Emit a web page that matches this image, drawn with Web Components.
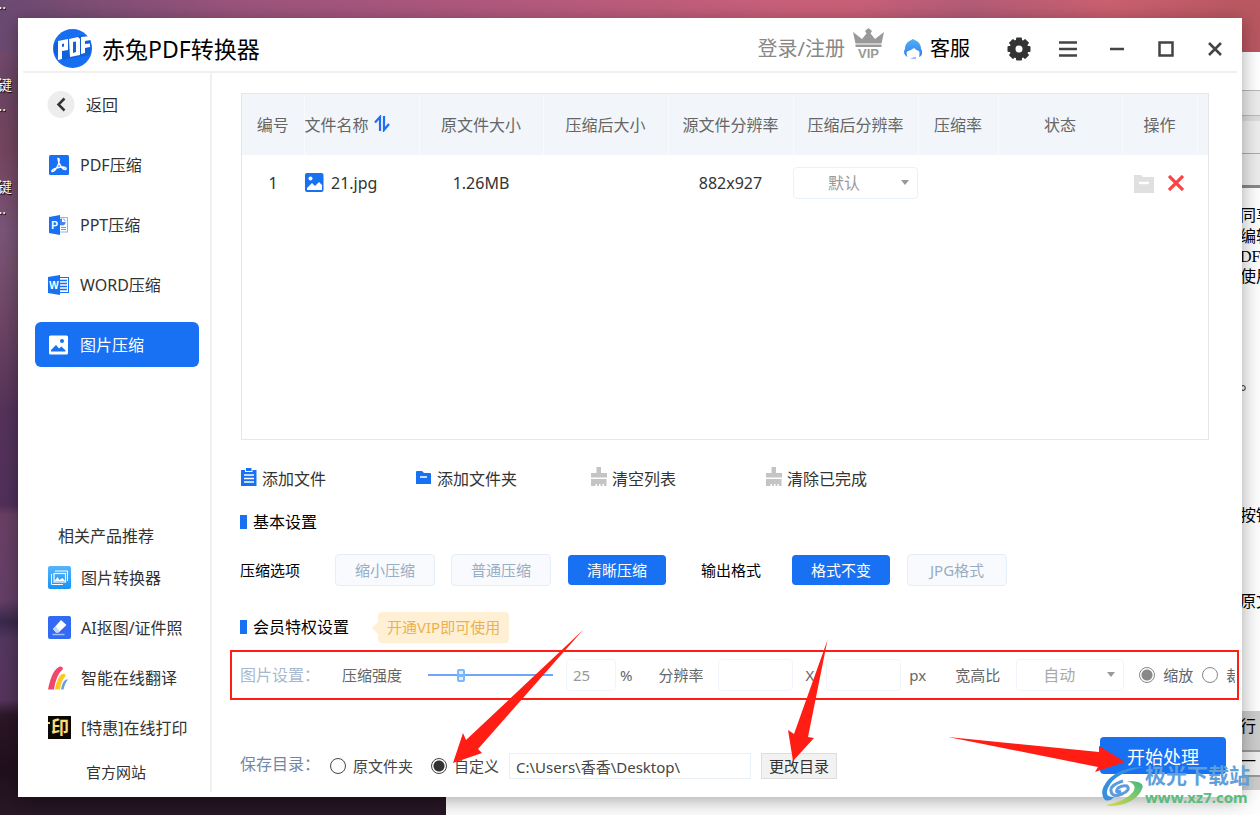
<!DOCTYPE html>
<html lang="zh-CN">
<head>
<meta charset="utf-8">
<title>赤兔PDF转换器</title>
<style>
  html, body { margin: 0; height: 100%; }
  body { font-family: "Noto Sans", "Noto Sans CJK SC", sans-serif; font-size: 16px; line-height: 24px; color: #333; }
</style>
</head>
<body>
<desk-scene>
  <app-window>
    <title-bar slot="title"></title-bar>
    <side-nav slot="nav"></side-nav>
    <file-table></file-table>
    <tool-row></tool-row>
    <section-heading>基本设置</section-heading>
    <option-row></option-row>
    <section-heading class="vip">会员特权设置<vip-badge slot="extra">开通VIP即可使用</vip-badge></section-heading>
    <image-settings></image-settings>
    <save-row></save-row>
  </app-window>
</desk-scene>

<script>
function define(name, html) {
  const tpl = document.createElement('template');
  tpl.innerHTML = html;
  customElements.define(name, class extends HTMLElement {
    constructor() {
      super();
      this.attachShadow({ mode: 'open' }).append(tpl.content.cloneNode(true));
    }
  });
}

/* Desktop with the document window behind the application */
define('back-window', `
<style>
  :host { display: block; position: absolute; left: 446px; right: 0; top: 52px; bottom: 0; background: #fdfdfd; overflow: hidden; color: #000; font-family: "Liberation Serif", "Noto Sans CJK SC", serif; }
  .bars { height: 136px; background: linear-gradient(#fff 0 38px, #b8b8b8 38px 39px, #ececec 39px 63px, #bbb 63px 64px, #dcdcdc 64px 69px, #ededed 69px 101px, #aaa 101px 102px, #ececec 102px 133px, #888 133px 136px); }
  .foot { position: absolute; left: 0; right: 0; bottom: 25px; height: 79px; background: linear-gradient(#ccc 0 39px, #999 39px 41px, #eee 41px 64px, #999 64px 66px, #ccc 66px); }
  span { position: absolute; right: 0; width: 20px; height: 20px; line-height: 20px; white-space: nowrap; overflow: hidden; }
</style>
<div class="bars"></div><div class="foot"></div>
<span style="top:154px">同享</span><span style="top:175px">编辑</span><span style="top:195px">DF转</span><span style="top:215px">使用</span>
<span style="top:322px">。</span><span style="top:454px">按钮</span><span style="top:540px">原文</span><span style="top:665px">行</span><span style="top:700px">一</span>`);

define('desk-scene', `
<style>
  :host { display: flex; position: relative; box-sizing: border-box; min-height: 100vh; padding: 18px; overflow: hidden;
    background: linear-gradient(90deg, #6b4a72, #9a547c 230px, #ab577e 420px, #c9607a 62%, #c96078 68%, #b45c78 77%, #cb6070 88%, #b8575f) 0 0 / 100% 52px no-repeat,
      linear-gradient(#80527b, #6c4565 80px, #74455f 150px, #7a5578 230px, #76506f 270px, #6c4464 330px, #55335a 410px, #51305a 505px, #6a4065 515px, #643f67 600px, #39294b 622px, #55375f 640px, #56345c 700px, #2c1628 715px, #21101c 770px, #281726); }
  slot { display: contents; }
  .cap { position: absolute; left: 0; width: 12px; height: 20px; overflow: hidden; direction: rtl; color: #fff; font-size: 14px; line-height: 20px; text-shadow: 1px 1px 1px #000; }
  .dots { width: 6px; }
</style>
<span class="cap dots" style="top:-6px">..</span><span class="cap" style="top:75px">键</span><span class="cap dots" style="top:96px">..</span>
<span class="cap" style="top:177px">键</span><span class="cap dots" style="top:199px">..</span>
<back-window></back-window><slot></slot>`);

define('app-window', `
<style>
  :host { position: relative; display: flex; flex-direction: column; flex: 1; min-width: 0; background: #fff; box-shadow: 0 3px 18px rgba(0,0,0,.35); }
  .body { flex: 1; display: flex; min-height: 0; }
  main { flex: 1; min-width: 0; display: flex; flex-direction: column; padding: 20px 16px 2px 28px; }
</style>
<slot name="title"></slot>
<div class="body"><slot name="nav"></slot><main><slot></slot></main></div>
<callout-marks></callout-marks>`);

define('title-bar', `
<style>
  :host { display: flex; align-items: center; height: 53px; margin: 0 5px; padding: 0 0 0 30px; border-bottom: 2px solid #efefef; }
  h1 { flex: 1; margin: 0 0 0 10px; padding-top: 8px; font-size: 23px; font-weight: 400; line-height: 30px; color: #000; white-space: nowrap; }
  .logo { margin-top: 7px; }
  a { display: flex; align-items: center; gap: 8px; margin-top: 9px; font-size: 20px; line-height: 28px; text-decoration: none; color: #888; white-space: nowrap; }
  a.help { color: #000; margin: 9px 24px 0 20px; }
  .login svg { margin-top: -8px; }
  .tools { display: flex; margin: 8px -2px 0 0; }
  button { width: 49px; height: 32px; padding: 0; border: 0; background: none; display: grid; place-items: center; }
  svg { display: block; }
</style>
<svg class="logo" width="39" height="39" viewBox="0 0 39 39"><circle cx="19.500" cy="19.500" r="19.500" fill="#176ef2"/><path d="M1 14 30 6 38 11 37 26 8 31 1 24Z" fill="#0c51bd" opacity=".45"/><path d="M5 12 15 10V21L9 22V30L5 31Z M9 15V18L11 17.600V14.600Z M16 10 25 8 27 10V26L17 28Z M20 13V24L23 23V12.500Z M28 8 38 7V11L32 12V15L37 14.500V18L32 19V24L28 25Z" fill="#fff" fill-rule="evenodd"/></svg>
<h1>赤兔PDF转换器</h1>
<a class="login" href="#login">登录/注册
<svg width="31" height="34" viewBox="0 0 31 34"><path d="M0 4 9 11 13.500 5.500 12 3 15.500 0 19 3 17.500 5.500 22 11 31 4 28.500 15.500H2.500Z M2.500 16.500H28.500V19H2.500Z" fill="#999"/><text x="15.500" y="30" text-anchor="middle" font-family="Liberation Sans" font-weight="700" font-size="13" fill="#999">VIP</text></svg></a>
<a class="help" href="#help"><svg width="18" height="20" viewBox="0 0 18 20"><defs><linearGradient id="h" x2="0" y2="1"><stop stop-color="#4eb2f2"/><stop offset="1" stop-color="#3577f5"/></linearGradient></defs><path d="M9 0 13.500 2.500Q17 5 17 10Q19 12 18 15Q17 18 15 18Q16 14 15 12L12.500 11 10 9Q6 12 3 12.500Q2 15 3.500 18Q0 16 0 13Q0 11 1 10Q1 5 4.500 2.500Z M6 18.500H8M10 18.500H12V19.500H6Z" fill="url(#h)"/></svg>客服</a>
<div class="tools">
<button aria-label="设置"><svg width="24" height="24" viewBox="-12 -12 24 24"><g fill="#333"><circle r="9.500"/><rect x="-3" y="-11.500" width="6" height="23" rx="1"/><rect x="-11.500" y="-3" width="23" height="6" rx="1"/><g transform="rotate(45)"><rect x="-3" y="-11.500" width="6" height="23" rx="1"/><rect x="-11.500" y="-3" width="23" height="6" rx="1"/></g></g><circle r="3.500" fill="#fff"/></svg></button>
<button aria-label="菜单"><svg width="18" height="16" viewBox="0 0 18 16"><path d="M0 1.500H18M0 8H18M0 14.500H18" stroke="#444" stroke-width="2.500"/></svg></button>
<button aria-label="最小化"><svg width="14" height="4" viewBox="0 0 14 4"><path d="M0 2H14" stroke="#444" stroke-width="2.500"/></svg></button>
<button aria-label="最大化"><svg width="16" height="16" viewBox="0 0 16 16"><rect x="1.500" y="1.500" width="13" height="13" fill="none" stroke="#444" stroke-width="2.500"/></svg></button>
<button aria-label="关闭"><svg width="14" height="14" viewBox="0 0 14 14"><path d="M1 1 13 13M13 1 1 13" stroke="#444" stroke-width="2.600"/></svg></button>
</div>`);

define('nav-item', `
<style>
  :host { display: block; }
  a { display: flex; align-items: center; box-sizing: border-box; height: 45px; padding: 0 0 0 12px; border-radius: 6px; color: #333; text-decoration: none; white-space: nowrap; }
  ::slotted(svg) { width: 24px; height: 24px; margin-right: 9px; flex: none; }
  :host([active]) a { background: #1870f3; color: #fff; }
  :host([small]) a { height: 30px; }
  :host([small]) ::slotted(svg) { margin-right: 9px; margin-left: 1px; }
  :host([back]) ::slotted(svg) { width: 28px; height: 28px; margin-right: 11px; }
</style><a href="#"><slot name="icon"></slot><slot></slot></a>`);

define('side-nav', `
<style>
  :host { display: flex; flex-direction: column; justify-content: space-between; box-sizing: border-box; width: 194px; flex: none; margin-bottom: 5px; padding: 9px 11px 10px 17px; border-right: 2px solid #f0f0f0; }
  nav { display: grid; gap: 15px; }
  .rel { gap: 20px; }
  h2 { margin: 0 0 -5px 23px; font-size: 16px; line-height: 24px; font-weight: 400; color: #333; }
  .site { margin: -1px 0 0 51px; font-size: 15px; line-height: 20px; color: #333; text-decoration: none; }
</style>
<nav>
<nav-item back><svg slot="icon" viewBox="0 0 28 28"><circle cx="14" cy="13.500" r="13.500" fill="#ededed"/><path d="M17.500 7.500 11.500 13.500 17.500 19.500" fill="none" stroke="#333" stroke-width="2.500"/></svg>返回</nav-item>
<nav-item><svg slot="icon" viewBox="0 0 24 24"><rect x="2" y="2" width="20" height="20" rx="1.500" fill="#1870f3"/><path d="M11 5.500C13 5 12 9 11.500 11C10 15 7 19 5 18.500C4 17 9 14.500 14 14C19 13.500 20 16 18.500 16.500C16 17 11 11 11 5.500Z" fill="none" stroke="#fff" stroke-width="1.400"/></svg>PDF压缩</nav-item>
<nav-item><svg slot="icon" viewBox="0 0 24 24"><rect x="12" y="4.500" width="8.500" height="14.500" fill="#fff" stroke="#8ab6f8"/><circle cx="15" cy="9" r="3.500" fill="#3f86f4"/><path d="M15 9V5L19 9Z" fill="#fff"/><path d="M14 14.500H19M14 16.500H19" stroke="#5f9bf6"/><path d="M2 4 13 2V22L2 20Z" fill="#1870f3"/><text x="7.500" y="15.500" text-anchor="middle" font-family="Liberation Sans" font-weight="700" font-size="10" fill="#fff">P</text></svg>PPT压缩</nav-item>
<nav-item><svg slot="icon" viewBox="0 0 24 24"><rect x="12" y="4.500" width="9.500" height="15" fill="#fff" stroke="#1870f3"/><path d="M13 7.500H20M13 10.500H20M13 13.500H20M13 16.500H20" stroke="#1870f3" stroke-width="1.500"/><path d="M1 4 13 2V22L1 20Z" fill="#1870f3"/><text x="7" y="15.500" text-anchor="middle" font-family="Liberation Sans" font-weight="700" font-size="10" fill="#fff">W</text></svg>WORD压缩</nav-item>
<nav-item active><svg slot="icon" viewBox="0 0 24 24"><rect x="2" y="2.500" width="19" height="19" rx="1.500" fill="#fff"/><circle cx="15" cy="8" r="2" fill="#1870f3"/><path d="M4 18.500V17L9 12 12 15.500 14.500 13.500 18.500 17.500V18.500Z" fill="#1870f3"/></svg>图片压缩</nav-item>
</nav>
<nav class="rel">
<h2>相关产品推荐</h2>
<nav-item small><svg slot="icon" viewBox="0 0 24 24"><defs><linearGradient id="b" x2="0" y2="1"><stop stop-color="#56b5fb"/><stop offset="1" stop-color="#1794f5"/></linearGradient></defs><rect x="0" y="0" width="23" height="23" rx="2" fill="url(#b)"/><path d="M7 5H19.500V15M3.500 8V18.500H15" fill="none" stroke="#fff"/><rect x="6" y="7.500" width="11.500" height="8.500" fill="none" stroke="#fff" stroke-width="1.200"/><path d="M6.500 15 9.500 11 11.500 14 14.500 12 17 15Z" fill="#fff"/></svg>图片转换器</nav-item>
<nav-item small><svg slot="icon" viewBox="0 0 24 24"><rect width="23" height="23" rx="2" fill="#336af3"/><path d="M13 4 18.500 9 10.500 16.500H8L5 13Z" fill="#fff"/><path d="M7.500 10.500 12 15 10.500 16.500H8L5 13Z" fill="#c5d7ff"/><path d="M4.500 18.500H16.500" stroke="#9fbdfc" stroke-width="1.500"/></svg>AI抠图/证件照</nav-item>
<nav-item small><svg slot="icon" viewBox="0 0 24 24"><path d="M0 23.500Q4 3 12 .500Q15 0 15 3Q8 9 6 23.500Z" fill="#f2476c"/><path d="M7 23.500Q9 11 14 8Q18 7 17.500 10Q13 15 12 23.500Z" fill="#fec824"/><path d="M13 23.500Q14.500 15 18 13.500L20 13.500Q17 17 15.500 23.500Z" fill="#679fe0"/></svg>智能在线翻译</nav-item>
<nav-item small><svg slot="icon" viewBox="0 0 24 24"><rect width="23" height="23" fill="#0b0803"/><path d="M0 6H2V8H0Z" fill="#fbdc77"/><text x="12" y="17.500" text-anchor="middle" font-family="Noto Sans CJK SC" font-weight="700" font-size="18" fill="#fbdc77">印</text></svg>[特惠]在线打印</nav-item>
<a class="site" href="#site">官方网站</a>
</nav>`);

define('file-table', `
<style>
  :host { display: block; flex: 1; min-height: 200px; margin-right: 17px; margin-left: 1px; border: 1px solid #e6e6e6; box-sizing: border-box; }
  table { width: 100%; table-layout: fixed; border-collapse: collapse; }
  th { height: 61px; padding: 0; background: #f2f6fa; color: #666; font-weight: 400; white-space: nowrap; border-right: 1px solid #f8fafc; box-sizing: border-box; }
  th:last-child { border: 0; }
  td { height: 56px; padding: 0; text-align: center; white-space: nowrap; }
  .name { text-align: left; }
  .cell { display: flex; align-items: center; gap: 5px; }
  td .cell { gap: 7px; padding-left: 1px; }
  .cell svg { margin-top: -2px; }
  .pick { display: block; position: relative; }
  select { appearance: none; display: block; box-sizing: border-box; width: 100%; height: 32px; padding: 0 34px; border: 1px solid #eaf1fa; border-radius: 4px; background: #fff; color: #999; font: inherit; opacity: 1; }
  .pick svg { position: absolute; right: 9px; top: 13px; }
  .ops { display: flex; justify-content: center; gap: 12px; }
  button { padding: 0; border: 0; background: none; display: grid; place-items: center; width: 20px; height: 20px; }
</style>
<table>
<colgroup><col style="width:62px"><col style="width:115px"><col style="width:124px"><col style="width:125px"><col style="width:125px"><col style="width:125px"><col style="width:80px"><col style="width:124px"><col style="width:75px"><col style="width:11px"></colgroup>
<thead><tr><th>编号</th><th class="name"><span class="cell">文件名称<svg width="16" height="17" viewBox="0 0 16 17"><path d="M6 16V2L1 7.500M10 1V15L15 9" fill="none" stroke="#1f6cf5" stroke-width="2.200"/></svg></span></th><th>原文件大小</th><th>压缩后大小</th><th>源文件分辨率</th><th>压缩后分辨率</th><th>压缩率</th><th>状态</th><th>操作</th><th></th></tr></thead>
<tbody><tr><td>1</td><td class="name"><span class="cell"><svg width="19" height="19" viewBox="0 0 19 19"><rect width="18.500" height="19" rx="2" fill="#1870f3"/><circle cx="5.500" cy="5.500" r="2" fill="#fff"/><path d="M2 17V15L7 10 10 13 14 9 17 12V17Z" fill="#fff"/></svg>21.jpg</span></td><td>1.26MB</td><td></td><td>882x927</td>
<td><span class="pick"><select aria-label="压缩后分辨率"><option>默认</option></select><svg width="8" height="6" viewBox="0 0 8 6"><path d="M0 0H8L4 5Z" fill="#999"/></svg></span></td><td></td><td></td>
<td><span class="ops"><button aria-label="打开文件夹"><svg width="20" height="19" viewBox="0 0 20 19"><path d="M0 1H7L9 3H20V19H0Z" fill="#e0e0e0"/><path d="M5 9H15" stroke="#fff" stroke-width="2.400"/></svg></button><button aria-label="删除"><svg width="16" height="16" viewBox="0 0 16 16"><path d="M1 1 15 15M15 1 1 15" stroke="#fb4343" stroke-width="3.200"/></svg></button></span></td><td></td></tr></tbody>
</table>`);

define('tool-row', `
<style>
  :host { display: grid; grid-template-columns: repeat(4, 175px); margin-top: 27px; }
  button { display: flex; align-items: center; gap: 4px; height: 24px; padding: 0; border: 0; background: none; font: inherit; line-height: 24px; color: #333; }
  svg { margin-top: -4px; }
</style>
<button><svg width="18" height="20" viewBox="0 0 18 20"><path d="M1 3H16.500V19H1Z" fill="#1870f3"/><path d="M5 0H12.500V5H5Z" fill="#fff"/><path d="M6 1H11.500V4H6Z" fill="#1870f3"/><path d="M4 8H14M4 11.500H14M4 15H14" stroke="#fff" stroke-width="1.500"/></svg>添加文件</button>
<button><svg width="18" height="20" viewBox="0 0 18 20"><path d="M1 5Q1 4 2 4H7L9 6H15Q16 6 16 7V17H1Z" fill="#1870f3"/><path d="M5 10H12" stroke="#fff" stroke-width="1.500"/></svg>添加文件夹</button>
<button><svg width="18" height="20" viewBox="0 0 18 20"><path d="M6.500 0H11V6H17V10.500H1V6H6.500Z M1 12H16.500V19H14V17H12.500V19H10.500V17H9V19H7V17H5.500V19H1Z" fill="#c4c4c4"/></svg>清空列表</button>
<button><svg width="18" height="20" viewBox="0 0 18 20"><path d="M6.500 0H11V6H17V10.500H1V6H6.500Z M1 12H16.500V19H14V17H12.500V19H10.500V17H9V19H7V17H5.500V19H1Z" fill="#c4c4c4"/></svg>清除已完成</button>`);

define('section-heading', `
<style>
  :host { display: flex; align-items: center; height: 24px; margin-top: 19px; color: #000; white-space: nowrap; }
  :host(.vip) { height: 32px; margin-top: 25px; }
  :host::before { content: ""; width: 7px; height: 14px; margin-right: 6px; background: #1870f3; }
  h2 { margin: 0; font: inherit; }
</style><h2><slot></slot></h2><slot name="extra"></slot>`);

define('vip-badge', `
<style>
  :host { display: block; position: relative; margin-left: 29px; padding: 0 9px; border-radius: 4px; background: #fff0d5; color: #e9b24f; font-size: 15px; line-height: 31px; }
  :host::before { content: ""; position: absolute; left: -6px; top: 10px; border: 6px solid transparent; border-left: 0; border-right-color: #fff0d5; }
</style><slot></slot>`);

define('option-row', `
<style>
  :host { display: flex; align-items: center; height: 32px; margin-top: 20px; font-size: 15px; color: #000; white-space: nowrap; }
  .group { display: flex; align-items: center; gap: 16px; }
  .group + .group { margin-left: 34px; }
  .label { margin-right: 19px; }
  .group + .group .label { margin-right: 14px; }
  button { box-sizing: border-box; width: 100px; height: 32px; padding: 0; border: 1px solid #e4edf8; border-radius: 4px; background: #f8fafd; color: #98adc6; font: inherit; }
  button[aria-pressed=true] { border-color: #fff; background: #1870f3 padding-box; color: #fff; }
</style>
<div class="group"><span class="label">压缩选项</span><button>缩小压缩</button><button>普通压缩</button><button aria-pressed="true">清晰压缩</button></div>
<div class="group"><span class="label">输出格式</span><button aria-pressed="true">格式不变</button><button>JPG格式</button></div>`);

define('image-settings', `
<style>
  :host { display: flex; align-items: center; height: 32px; margin: 16px -9px 0 0; overflow: hidden; font-size: 15px; color: #666; white-space: nowrap; }
  :host > * { flex: none; }
  .title { width: 102px; font-size: 16px; color: #a7b8cf; }
  input[type=range] { appearance: none; width: 125px; height: 14px; margin: 0 13px 0 26px; background: linear-gradient(#6ea6f8, #6ea6f8) 0 6px / 100% 2px no-repeat; }
  input[type=range]::-webkit-slider-thumb { appearance: none; width: 8px; height: 13px; box-sizing: border-box; border-radius: 2px; border: 2px solid #7db7fb; background: linear-gradient(#dceeff 0 3px, #7db7fb 3px 6px, #dceeff 6px); }
  input[type=text] { box-sizing: border-box; width: 75px; height: 32px; padding: 0 6px; border: 1px solid #f0f5fb; border-radius: 4px; font: inherit; color: #999; background: #fff; }
  input.pct { width: 50px; }
  .unit { margin: 0 26px 0 4px; }
  .by { margin: 0 12px 0 13px; }
  .px { margin: 0 29px 0 8px; }
  #w { margin-left: 14px; }
  .pick { position: relative; margin: 0 15px 0 16px; }
  select { appearance: none; display: block; box-sizing: border-box; width: 108px; height: 32px; padding: 0 26px; border: 1px solid #f0f5fb; border-radius: 4px; background: #fff; color: #aaa; font-family: inherit; font-size: 16px; }
  .pick svg { position: absolute; right: 9px; top: 13px; }
  .radio { display: flex; align-items: center; gap: 8px; margin-right: 9px; }
  input[type=radio] { appearance: none; box-sizing: border-box; width: 16px; height: 16px; margin: 0; border: 1px solid #888; border-radius: 50%; }
  input[type=radio]:checked { background: radial-gradient(circle, #888 0 5px, #fff 6px); }
</style>
<span class="title">图片设置：</span>
<label for="s">压缩强度</label><input id="s" type="range" value="25">
<input class="pct" type="text" value="25" aria-label="压缩强度百分比"><span class="unit">%</span>
<label for="w">分辨率</label><input id="w" type="text"><span class="by">X</span><input type="text" aria-label="高度"><span class="px">px</span>
<label for="r">宽高比</label><span class="pick"><select id="r"><option>自动</option></select><svg width="8" height="6" viewBox="0 0 8 6"><path d="M0 0H8L4 5Z" fill="#999"/></svg></span>
<label class="radio"><input type="radio" name="fit" checked>缩放</label><label class="radio"><input type="radio" name="fit">裁</label>`);

define('save-row', `
<style>
  :host { display: flex; align-items: center; height: 58px; margin-top: 46px; font-size: 15px; color: #444; white-space: nowrap; }
  .title { width: 90px; margin-bottom: 4px; font-size: 16px; color: #7088a8; }
  .radio { display: flex; align-items: center; gap: 7px; margin-right: 18px; }
  input[type=radio] { appearance: none; box-sizing: border-box; width: 16px; height: 16px; margin: 0; border: 1px solid #444; border-radius: 50%; }
  input[type=radio]:checked { background: radial-gradient(circle, #333 0 5px, #fff 6px); }
  .radio + .radio { margin-right: 10px; }
  input[type=text] { box-sizing: border-box; width: 242px; height: 26px; padding: 0 6px; border: 1px solid #e8f0f8; font: inherit; color: #444; }
  .change { box-sizing: border-box; width: 76px; height: 26px; margin-left: 10px; padding: 0; border: 1px solid #ddd; background: #f2f2f2; font: inherit; line-height: 22px; color: #333; }
  .start { align-self: flex-start; width: 126px; height: 37px; margin: 0 0 0 auto; padding: 0; border: 0; border-radius: 4px; background: #1870f3; color: #fff; font-family: inherit; font-size: 18px; }
</style>
<span class="title">保存目录：</span>
<label class="radio"><input type="radio" name="dir">原文件夹</label><label class="radio"><input type="radio" name="dir" checked>自定义</label>
<input type="text" value="C:\\Users\\香香\\Desktop\\" aria-label="保存目录">
<button class="change">更改目录</button><button class="start">开始处理</button>`);

/* Tutorial marks drawn over the window: highlight frame, three arrows, site mark */
define('callout-marks', `
<style>
  :host { position: absolute; inset: 0; pointer-events: none; }
  .frame { position: absolute; left: 212px; right: 3px; bottom: 97px; height: 50px; box-sizing: border-box; border: 2px solid #ff1d14; }
  .arrow { position: absolute; fill: #ff1d14; }
  .mark { position: absolute; right: -8px; bottom: -10px; display: flex; align-items: center; gap: 1px; white-space: nowrap; }
  .cn { font-size: 21px; line-height: 32px; height: 26px; margin-top: -8px; font-weight: 700; color: #5f9fdc; }
  .url { margin-top: 2px; font-size: 15px; line-height: 20px; font-weight: 700; color: #58bd7c; }
</style>
<div class="frame"></div>
<svg class="arrow" style="left:435px;bottom:34px" width="131" height="133" viewBox="0 0 131 133"><path d="M0 133 10 103 13 110 130 0 25 119 29 123Z"/></svg>
<svg class="arrow" style="left:770px;bottom:36px" width="40" height="121" viewBox="0 0 40 121"><path d="M5 121 0 90 6 94 39.500 0 20 97 26 98Z"/></svg>
<svg class="arrow" style="right:117px;bottom:24px" width="177" height="36" viewBox="0 0 177 36"><path d="M177 25 151 9V15L0 0 150 30 147 35Z"/></svg>
<div class="mark">
<svg width="42" height="40" viewBox="0 0 42 40"><defs><linearGradient id="g" x2="1" y2="1"><stop stop-color="#2b8fe0"/><stop offset="1" stop-color="#4a8fd8"/></linearGradient><linearGradient id="y" x1="1" x2="0" y2="1"><stop stop-color="#3fb884"/><stop offset="1" stop-color="#ddd94a"/></linearGradient></defs>
<path d="M42 0Q18 0 6 13Q-4 25 3 33Q8 35 12 30Q2 30 6 21Q12 6 42 0Z" fill="url(#g)"/><path d="M21 14Q8 18 9 24Q10 31 20 27Q29 23 25 19Q20 18 16 21Q12 27 19 24" fill="none" stroke="#5c9bdc" stroke-width="3"/><path d="M25 14Q44 14 40 22Q35 34 18 38Q8 40 4 38Q24 34 31 25Q36 17 25 14Z" fill="url(#y)"/></svg>
<div><div class="cn">极光下载站</div><div class="url">www.xz7.com</div></div></div>`);
</script>
</body>
</html>
